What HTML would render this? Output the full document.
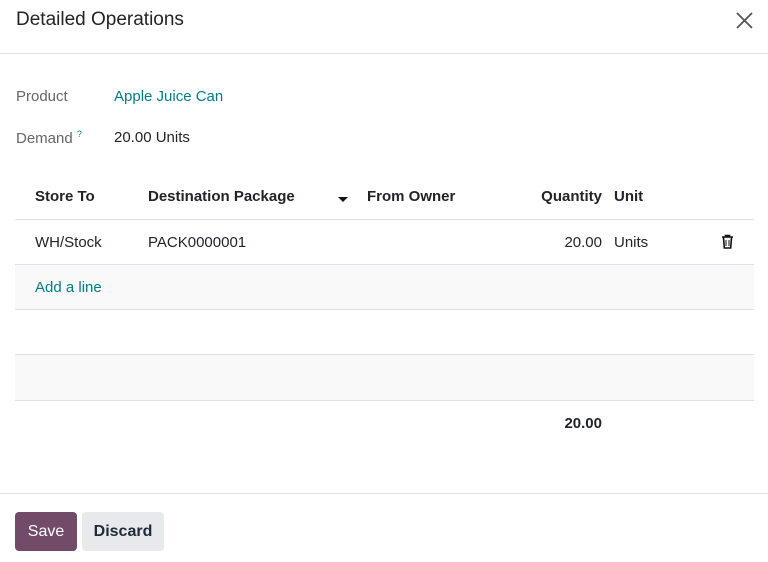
<!DOCTYPE html>
<html><head><style>
*{margin:0;padding:0;box-sizing:border-box}
body{width:768px;height:562px;background:#fff;font-family:"Liberation Sans",sans-serif;color:#212529;position:relative;overflow:hidden;font-size:15px}
.a{position:absolute;white-space:nowrap}
.r{position:absolute;white-space:nowrap;right:166px;text-align:right}
.line{position:absolute;left:15px;width:739px;height:1px;background:#dee2e6}
.b{font-weight:bold}
</style></head><body>
<div class="a" style="left:16px;top:9px;font-size:19px">Detailed Operations</div>
<svg class="a" style="left:735px;top:11px" width="19" height="19" viewBox="0 0 19 19"><path d="M2 2L17 17M17 2L2 17" stroke="#555" stroke-width="1.8"/></svg>
<div class="a" style="left:0;top:53px;width:768px;height:1px;background:#dee2e6"></div>
<div class="a" style="left:16px;top:88px;color:#666">Product</div>
<div class="a" style="left:114px;top:88px;color:#017e84">Apple Juice Can</div>
<div class="a" style="left:16px;top:129px;color:#666">Demand <sup style="color:#017e84;font-size:9px">?</sup></div>
<div class="a" style="left:114px;top:129px">20.00 Units</div>
<div class="a b" style="left:35px;top:188px">Store To</div>
<div class="a b" style="left:148px;top:188px">Destination Package</div>
<div class="a" style="left:338px;top:197px;width:0;height:0;border-left:5px solid transparent;border-right:5px solid transparent;border-top:5px solid #111"></div>
<div class="a b" style="left:367px;top:188px">From Owner</div>
<div class="r b" style="top:188px">Quantity</div>
<div class="a b" style="left:614px;top:188px">Unit</div>
<div class="line" style="top:219px"></div>
<div class="a" style="left:35px;top:234px">WH/Stock</div>
<div class="a" style="left:148px;top:234px">PACK0000001</div>
<div class="r" style="top:234px">20.00</div>
<div class="a" style="left:614px;top:234px">Units</div>
<svg class="a" style="left:721px;top:234px" width="13" height="15" viewBox="0 0 13 15"><path d="M1 3h11M4.5 3V1.5h4V3M2.5 3.5l.8 10.5h6.4l.8-10.5" fill="none" stroke="#111" stroke-width="1.6"/><path d="M5 6v6M8 6v6" stroke="#111" stroke-width="1"/></svg>
<div class="line" style="top:264px"></div>
<div class="a" style="left:15px;top:265px;width:739px;height:44px;background:#f9f9f9"></div>
<div class="a" style="left:35px;top:279px;color:#017e84">Add a line</div>
<div class="line" style="top:309px"></div>
<div class="line" style="top:354px"></div>
<div class="a" style="left:15px;top:355px;width:739px;height:45px;background:#f9f9f9"></div>
<div class="line" style="top:400px"></div>
<div class="r b" style="top:415px">20.00</div>
<div class="a" style="left:0;top:493px;width:768px;height:1px;background:#dee2e6"></div>
<div class="a" style="left:15px;top:512px;width:62px;height:39px;background:#714b67;border-radius:4px;color:#fff;text-align:center;line-height:40px;font-size:16px">Save</div>
<div class="a b" style="left:82px;top:512px;width:82px;height:39px;background:#e7e9ed;border-radius:4px;text-align:center;line-height:40px;color:#1f2937;font-size:16px">Discard</div>
</body></html>
